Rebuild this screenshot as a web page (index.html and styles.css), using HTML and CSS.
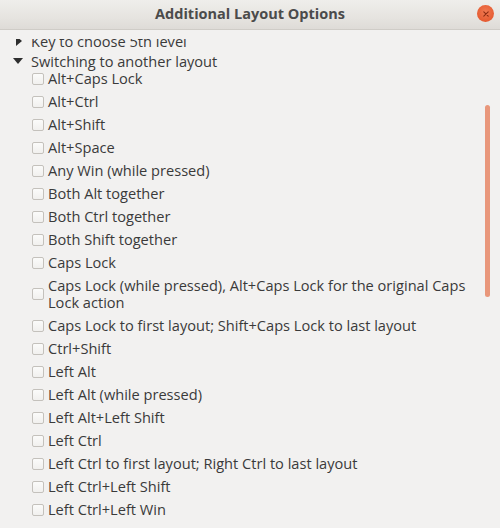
FILE: index.html
```html
<!DOCTYPE html>
<html>
<head>
<meta charset="utf-8">
<link rel="stylesheet" href="styles.css">
</head>
<body>
<div class="window">
  <header class="titlebar">
    <span class="title">Additional Layout Options</span>
    <span class="close"><svg width="6" height="6" viewBox="0 0 6 6"><path d="M0.8 0.8L5.2 5.2M5.2 0.8L0.8 5.2" stroke="#8c2c12" stroke-width="1.1" stroke-linecap="round"/></svg></span>
  </header>
  <div class="content">
    <div class="viewport">
      <div class="tree">
        <div class="node"><span class="arrow collapsed"></span><span>Key to choose 5th level</span></div>
        <div class="node"><span class="arrow expanded"></span><span>Switching to another layout</span></div>
        <ul class="options">
          <li class="opt"><span class="cb"></span><span class="lbl">Alt+Caps Lock</span></li>
          <li class="opt"><span class="cb"></span><span class="lbl">Alt+Ctrl</span></li>
          <li class="opt"><span class="cb"></span><span class="lbl">Alt+Shift</span></li>
          <li class="opt"><span class="cb"></span><span class="lbl">Alt+Space</span></li>
          <li class="opt"><span class="cb"></span><span class="lbl">Any Win (while pressed)</span></li>
          <li class="opt"><span class="cb"></span><span class="lbl">Both Alt together</span></li>
          <li class="opt"><span class="cb"></span><span class="lbl">Both Ctrl together</span></li>
          <li class="opt"><span class="cb"></span><span class="lbl">Both Shift together</span></li>
          <li class="opt"><span class="cb"></span><span class="lbl">Caps Lock</span></li>
          <li class="opt"><span class="cb"></span><span class="lbl">Caps Lock (while pressed), Alt+Caps Lock for the original Caps<br>Lock action</span></li>
          <li class="opt"><span class="cb"></span><span class="lbl">Caps Lock to first layout; Shift+Caps Lock to last layout</span></li>
          <li class="opt"><span class="cb"></span><span class="lbl">Ctrl+Shift</span></li>
          <li class="opt"><span class="cb"></span><span class="lbl">Left Alt</span></li>
          <li class="opt"><span class="cb"></span><span class="lbl">Left Alt (while pressed)</span></li>
          <li class="opt"><span class="cb"></span><span class="lbl">Left Alt+Left Shift</span></li>
          <li class="opt"><span class="cb"></span><span class="lbl">Left Ctrl</span></li>
          <li class="opt"><span class="cb"></span><span class="lbl">Left Ctrl to first layout; Right Ctrl to last layout</span></li>
          <li class="opt"><span class="cb"></span><span class="lbl">Left Ctrl+Left Shift</span></li>
          <li class="opt"><span class="cb"></span><span class="lbl">Left Ctrl+Left Win</span></li>
        </ul>
      </div>
      <div class="scrollbar"></div>
    </div>
  </div>
</div>
</body>
</html>
```
FILE: styles.css
```css
* { box-sizing: border-box; }
html, body {
  margin: 0;
  padding: 0;
  width: 500px;
  height: 528px;
  overflow: hidden;
  background: #f2f1f0;
}
.window {
  display: flex;
  flex-direction: column;
  height: 528px;
  font-family: "Open Sans", "DejaVu Sans", sans-serif;
  color: #3a3a3a;
}
.titlebar {
  height: 30px;
  flex: none;
  display: flex;
  align-items: center;
  justify-content: center;
  position: relative;
  background: linear-gradient(to bottom, #efeeeb 0%, #e6e4e0 60%, #dedbd7 100%);
  border-bottom: 1px solid #cfccc7;
}
.title {
  font-weight: 700;
  font-size: 14.5px;
  color: #4b4b4b;
  margin-top: -2px;
}
.close {
  position: absolute;
  right: 6px;
  top: 5px;
  width: 17px;
  height: 17px;
  border-radius: 50%;
  background: radial-gradient(circle at 50% 40%, #f07a52 0%, #e65c32 70%, #dc5129 100%);
  display: flex;
  align-items: center;
  justify-content: center;
}
.content {
  flex: 1;
  padding-top: 9px;
  padding-bottom: 6px;
  min-height: 0;
  display: flex;
}
.viewport {
  flex: 1;
  overflow: hidden;
  position: relative;
}
.tree {
  margin-top: -8px;
  font-size: 14.6px;
}
.node {
  height: 20px;
  line-height: 20px;
  display: flex;
  align-items: center;
  padding-left: 13px;
}
.arrow {
  width: 11px;
  height: 10px;
  margin-right: 7px;
  position: relative;
  flex: none;
}
.arrow.collapsed::before {
  content: "";
  position: absolute;
  left: 3px;
  top: 0;
  border-left: 6px solid #2e2e2e;
  border-top: 5px solid transparent;
  border-bottom: 5px solid transparent;
}
.arrow.expanded::before {
  content: "";
  position: absolute;
  left: 0;
  top: 2px;
  border-top: 6px solid #2e2e2e;
  border-left: 5.5px solid transparent;
  border-right: 5.5px solid transparent;
}
.options {
  list-style: none;
  margin: -4px 0 0 0;
  padding: 0 0 0 32px;
}
.opt {
  display: flex;
  align-items: center;
  padding: 3px 0;
  line-height: 17px;
}
.cb {
  width: 12px;
  height: 12px;
  flex: none;
  border: 1px solid #c4c1bc;
  border-radius: 2px;
  background: linear-gradient(to bottom, #fbfbfa, #f1f0ee);
  margin-right: 4px;
}
.lbl {
  white-space: nowrap;
}
.scrollbar {
  position: absolute;
  left: 485px;
  top: 66px;
  width: 5px;
  height: 192px;
  border-radius: 3px;
  background: #e9977b;
}
```
